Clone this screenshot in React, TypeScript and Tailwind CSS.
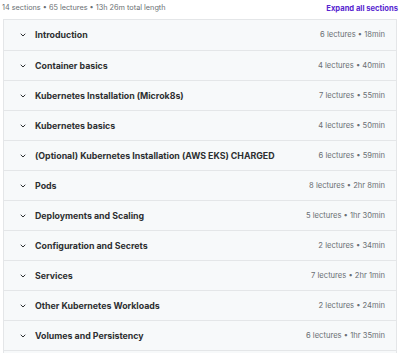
import React from "react";

const sections: [string, string][] = [
  ["Introduction", "6 lectures • 18min"],
  ["Container basics", "4 lectures • 40min"],
  ["Kubernetes Installation (Microk8s)", "7 lectures • 55min"],
  ["Kubernetes basics", "4 lectures • 50min"],
  ["(Optional) Kubernetes Installation (AWS EKS) CHARGED", "6 lectures • 59min"],
  ["Pods", "8 lectures • 2hr 8min"],
  ["Deployments and Scaling", "5 lectures • 1hr 30min"],
  ["Configuration and Secrets", "2 lectures • 34min"],
  ["Services", "7 lectures • 2hr 1min"],
  ["Other Kubernetes Workloads", "2 lectures • 24min"],
  ["Volumes and Persistency", "6 lectures • 1hr 35min"],
];

function Chevron() {
  return (
    <svg width="8" height="8" viewBox="0 0 24 24" fill="none" stroke="#2d2f31" strokeWidth="3" strokeLinecap="round" strokeLinejoin="round">
      <path d="M6 9l6 6 6-6" />
    </svg>
  );
}

export default function App() {
  return (
    <div className="w-[400px] h-[353px] overflow-hidden bg-white" style={{ fontFamily: "Inter, 'Noto Sans', sans-serif" }}>
      <div className="flex items-center justify-between pl-[2px] pr-[2px] h-[17px]">
        <span className="text-[7.3px] text-[#6a6f73]">14 sections • 65 lectures • 13h 26m total length</span>
        <span className="text-[7.6px] font-bold text-[#5624d0]">Expand all sections</span>
      </div>
      <div className="mx-[3px] mt-[2px] border border-[#e4e6e8]">
        {sections.map(([t, m], i) => (
          <div key={i} className={"flex items-center h-[30px] bg-[#f7f9fa] " + (i > 0 ? "border-t border-[#e4e6e8]" : "")}>
            <div className="w-[31px] flex justify-end pr-[8px]"><Chevron /></div>
            <span className="flex-1 text-[8.8px] font-bold text-[#2d2f31]">{t}</span>
            <span className="text-[7.6px] text-[#6a6f73] pr-[11px]">{m}</span>
          </div>
        ))}
        <div className="h-[30px] bg-[#f7f9fa] border-t border-[#e4e6e8]" />
      </div>
    </div>
  );
}
